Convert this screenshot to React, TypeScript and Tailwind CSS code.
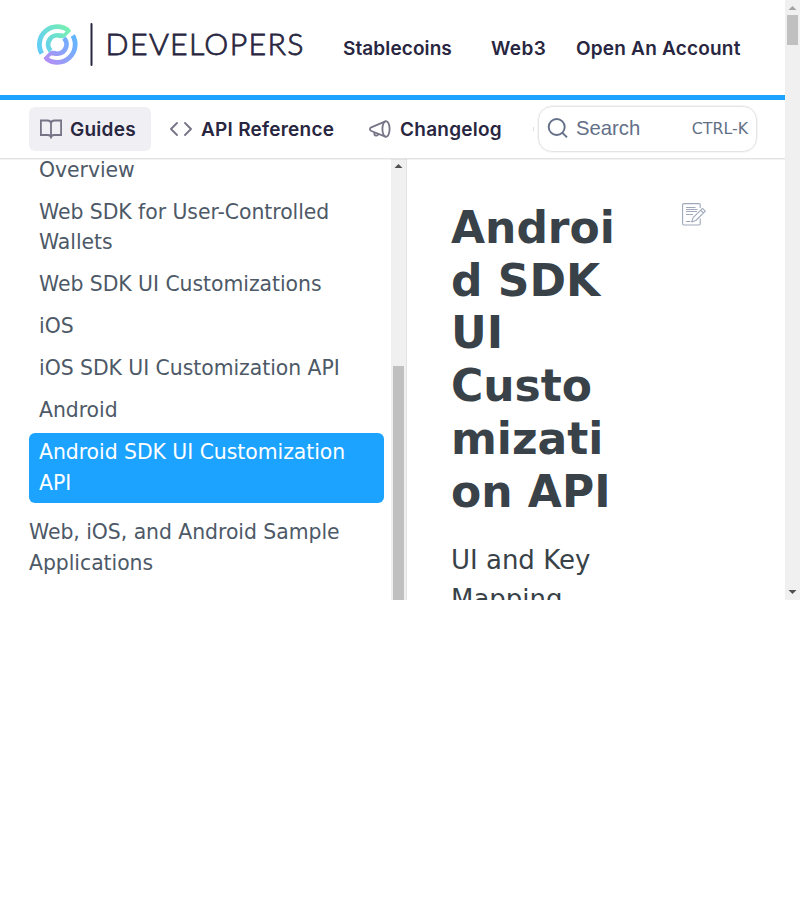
import React from "react";

const sans = "font-['DejaVu_Sans',sans-serif]";
const brand = "font-['Inter',sans-serif]";

function Swirl({ paint }: { paint: string }) {
  return (
    <g>
      <path d="M41.8 53.45 A17.9 17.9 0 0 1 68.3 30.4" fill="none" stroke={paint} strokeWidth="4.8" />
      <path d="M50.6 50.8 A9.2 9.2 0 0 1 60.1 35.75" fill="none" stroke={paint} strokeWidth="4.8" />
      <path d="M66.2 27.2 L70.4 29.8 Q71.5 30.5 70.6 31.5 L64.7 37.4 Q63.6 38.5 62 38.3 L58.8 37.9 L59.8 33.2 L63.6 33.5 L65.6 31.4Z" fill={paint} />
    </g>
  );
}

function Logo() {
  return (
    <svg className="block shrink-0" width="270" height="46" viewBox="36 22 270 46">
      <defs>
        <linearGradient id="top" x1="38" y1="50" x2="70" y2="30" gradientUnits="userSpaceOnUse">
          <stop offset="0" stopColor="#60cbfa" />
          <stop offset="1" stopColor="#78f0b0" />
        </linearGradient>
        <linearGradient id="bottom" x1="66" y1="28" x2="39" y2="50" gradientUnits="userSpaceOnUse">
          <stop offset="0" stopColor="#b090f5" />
          <stop offset="1" stopColor="#62b6ff" />
        </linearGradient>
      </defs>
      <Swirl paint="url(#top)" />
      <g transform="rotate(180 57.3 44.5)"><Swirl paint="url(#bottom)" /></g>
      <path d="M91.5 24V65" stroke="#282640" strokeWidth="2" strokeLinecap="round" />
      <text x="105.6" y="55" textLength="198" lengthAdjust="spacing" fontFamily="Lato, sans-serif" fontWeight="300" fontSize="30.3" fill="#282640" stroke="#282640" strokeWidth=".8">DEVELOPERS</text>
    </svg>
  );
}

function BookIcon() {
  return (
    <svg className="shrink-0" width="22" height="20" viewBox="0 0 22 20" fill="none" stroke="#777386" strokeWidth="1.8">
      <path d="M11 19.5V4.5Q11 1.5 7.5 1.5H.9V16H7.8Q11 16 11 18.5Q11 16 14.2 16H21.1V1.5H14.5Q11 1.5 11 4.5" />
    </svg>
  );
}

function CodeIcon() {
  return (
    <svg className="shrink-0" width="22" height="14" viewBox="0 0 22 14" fill="none" stroke="#777386" strokeWidth="1.8" strokeLinecap="round" strokeLinejoin="round">
      <path d="M7 1 1 7l6 6M15 1l6 6-6 6" />
    </svg>
  );
}

function MegaphoneIcon() {
  return (
    <svg className="shrink-0" width="22" height="18" viewBox="0 0 22 18" fill="none" stroke="#777386" strokeWidth="1.8" strokeLinejoin="round">
      <ellipse cx="17" cy="9" rx="3.6" ry="7.8" />
      <path d="M17 1.2 2.2 7.3Q.8 8 .9 9.3T2.3 11L17 16.8M5.5 12.3Q4.7 15.5 7.2 15.7Q9 15.8 9.3 13.8" />
    </svg>
  );
}

function EditIcon() {
  return (
    <svg className="block" width="24" height="23" viewBox="0 0 24 23" fill="none" stroke="#9fa9ba" strokeWidth="1.1" strokeLinejoin="round">
      <path d="M18.2 5V1.7Q18.2.6 17 .6H1.8Q.6.6.6 1.8V20.8Q.6 22 1.8 22H17Q18.2 22 18.2 20.8V15.5M4 4.5h9.5M4 6.5h11.5M4 8.5h11M4 11.5h7M4 18.5h4.5" />
      <path d="m9.7 18.9 1.4-4.2L20.5 5.3l2.8 2.8-9.5 9.4ZM18.6 7.2l2.8 2.8" />
    </svg>
  );
}

const items = ["Overview", "Web SDK for User-Controlled Wallets", "Web SDK UI Customizations", "iOS", "iOS SDK UI Customization API", "Android"];

export default function App() {
  return (
    <div className="h-[900px] w-[800px] bg-white">
      <div className="flex h-[600px] overflow-hidden">
        <div className="flex w-[785px] flex-col">
          <header className={`${brand} flex h-[100px] shrink-0 items-start border-b-[5px] border-[#1ba3ff] pt-[22px] pl-9 text-[19px] font-semibold tracking-[0.2px] text-[#282640]`}>
            <Logo />
            <nav className="flex pt-[13px] pl-[37px] leading-7 whitespace-nowrap">
              <a className="w-[148px] tracking-[0.1px]">Stablecoins</a>
              <a className="w-[85px] tracking-[0.4px]">Web3</a>
              <a>Open An Account</a>
            </nav>
          </header>
          <div className={`${brand} relative z-10 flex h-[59px] shrink-0 items-center border-b border-[#e3e3e4] pl-[29px] text-[19px] font-semibold tracking-[0.25px] whitespace-nowrap text-[#282640] shadow-[0_1px_0_rgba(0,0,0,0.05)]`}>
            <a className="flex h-11 w-[122px] items-center gap-2 rounded-md bg-[#f0eff4] pl-[11px]"><BookIcon /><span className="pt-[2px]">Guides</span></a>
            <a className="flex w-[199px] items-center gap-[9px] pl-[19px]"><CodeIcon /><span className="pt-[2px]">API Reference</span></a>
            <a className="flex w-[183px] items-center gap-[9px] pl-[19px]"><MegaphoneIcon /><span className="pt-[2px]">Changelog</span></a>
            <span className="h-1 w-[5px] border-l border-[#dedee3]" />
            <div className="flex h-[46px] w-[219px] items-center rounded-[14px] border-[1.5px] border-[#e4e4e6] px-[8px] font-normal tracking-normal text-[#637087] shadow-[0_0_0_0.5px_#ededee]">
              <svg className="mb-px" width="21" height="21" viewBox="0 0 21 21" fill="none" stroke="currentColor" strokeWidth="1.9"><circle cx="9.7" cy="9" r="8" /><path d="m15.5 14.8 4.5 4.5" /></svg>
              <span className="ml-2 pb-[2px] font-['Liberation_Sans',sans-serif] text-[20.3px]">Search</span>
              <span className={`${sans} ml-auto text-[15.8px]`}>CTRL-K</span>
            </div>
          </div>
          <main className={`${sans} flex min-h-0 flex-1`}>
            <aside className="flex w-[391px] shrink-0 flex-col overflow-hidden pl-[29px] text-[20.4px] leading-[30.6px] tracking-[-0.04px] text-[#4d5967]">
              <div className="-mt-[9px] flex w-[355px] shrink-0 flex-col gap-[2px]">
                {items.map((item) => <a key={item} className="px-[10px] py-[4.7px]">{item}</a>)}
                <a className="mt-px h-[70px] rounded-[6px] bg-[#1ba3ff] px-[10px] pt-[4px] text-white">Android SDK UI Customization API</a>
              </div>
              <a className="mt-[14px] w-[345px]">Web, iOS, and Android Sample Applications</a>
            </aside>
            <div className="flex w-[15px] shrink-0 flex-col items-center bg-[#f0f0f0]">
              <svg className="shrink-0" width="15" height="207" viewBox="0 0 15 207"><path d="M3.5 9 7.5 5l4 4Z" fill="#505050" /></svg>
              <div className="w-[11px] flex-1 bg-[#c0c0c0]" />
            </div>
            <article className="flex flex-1 items-start border-l border-[#e3e3e3] pl-[44px] text-[#384248]">
              <div className="w-[174px] shrink-0 pt-[42.8px]">
                <h1 className="text-[44px] leading-[52.8px] font-bold break-all">Androi<br />d SDK<br />UI<br />Custo<br />mizati<br />on API</h1>
                <p className="mt-[22px] text-[26px] leading-[39px]">UI and Key Mapping</p>
              </div>
              <div className="pt-[44px] pl-[57px]"><EditIcon /></div>
            </article>
          </main>
        </div>
        <div className="flex w-[15px] flex-col items-center bg-[#f0f0f0]">
          <svg className="shrink-0" width="15" height="15"><path d="M3.5 10 7.5 6l4 4Z" fill="#a3a3a3" /></svg>
          <div className="h-[30px] w-[11px] bg-[#c0c0c0]" />
          <svg className="mt-auto" width="15" height="15"><path d="m3.5 5 4 4 4-4Z" fill="#505050" /></svg>
        </div>
      </div>
    </div>
  );
}
